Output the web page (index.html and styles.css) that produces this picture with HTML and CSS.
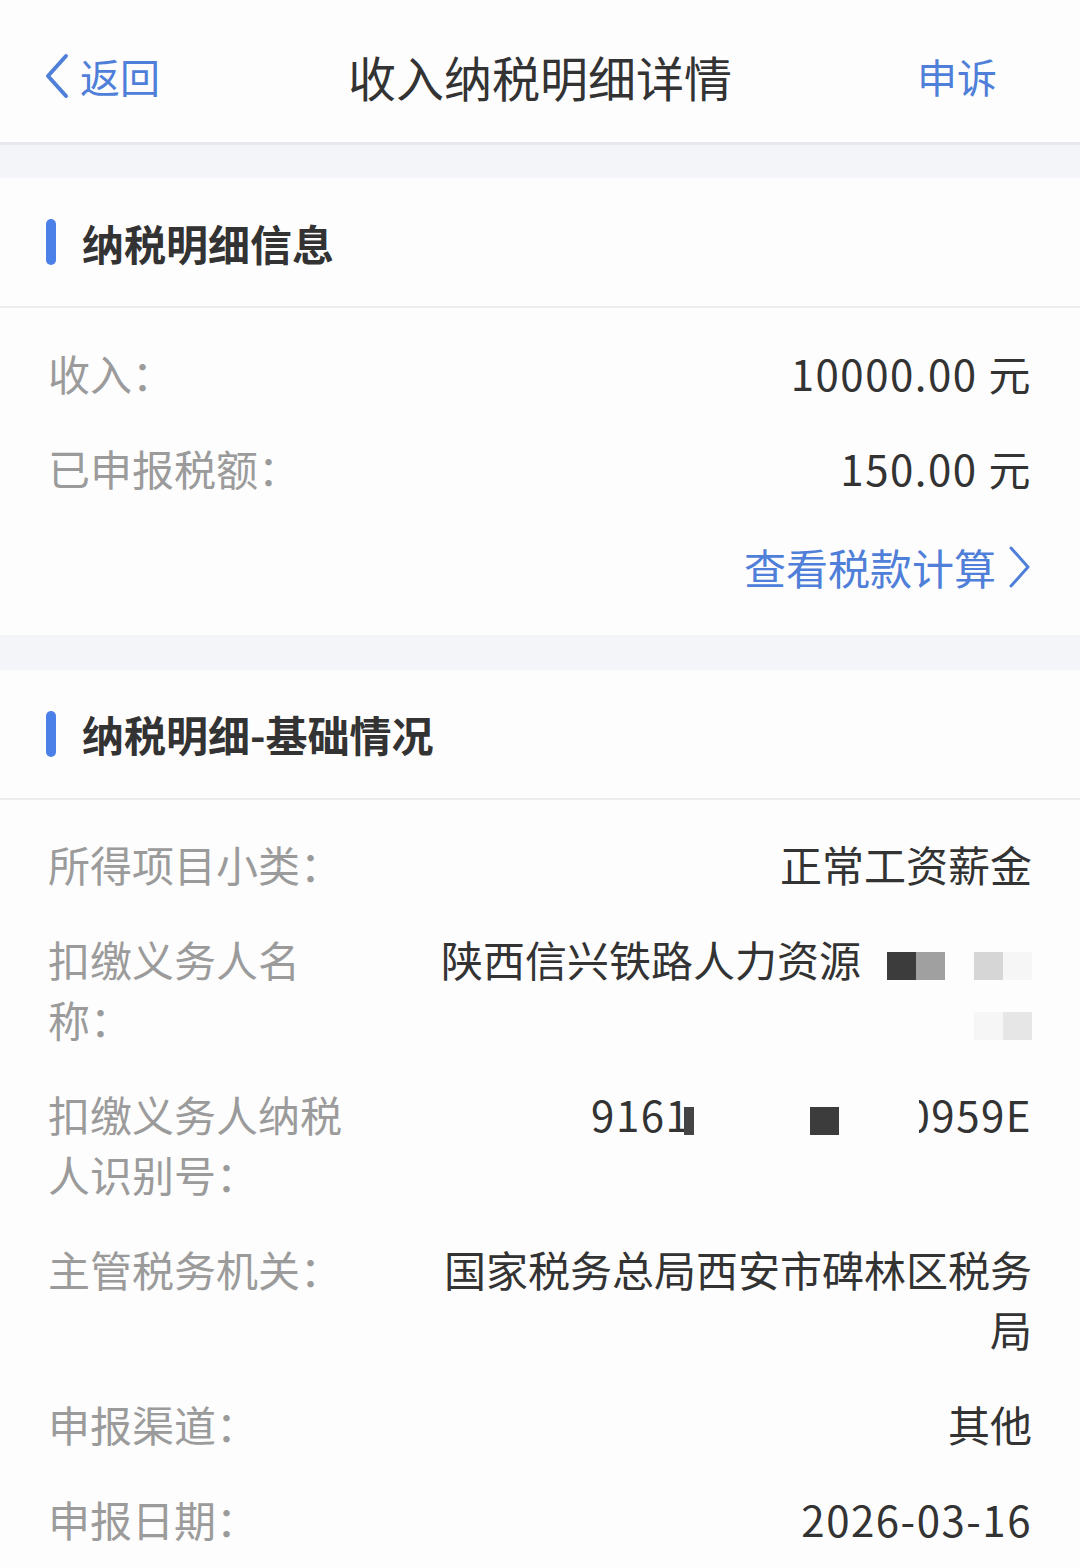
FILE: index.html
```html
<!DOCTYPE html>
<html lang="zh-CN">
<head>
  <meta charset="UTF-8">
  <title>收入纳税明细详情</title>
  <link rel="stylesheet" href="styles.css">
</head>
<body>
  <header class="topbar">
    <a class="back">
      <svg class="back-icon" viewBox="0 0 26 46" width="26" height="46">
        <path d="M22 3 L4 23 L22 43" fill="none" stroke="#4f7fd8" stroke-width="4" stroke-linecap="round" stroke-linejoin="round"/>
      </svg>
      <span>返回</span>
    </a>
    <h1 class="title">收入纳税明细详情</h1>
    <a class="appeal">申诉</a>
  </header>

  <div class="gap"></div>

  <section class="card">
    <div class="card-head">
      <span class="bar"></span>
      <h2>纳税明细信息</h2>
    </div>
    <div class="rows first">
      <div class="row">
        <span class="label">收入：</span>
        <span class="value num">10000.00 元</span>
      </div>
      <div class="row">
        <span class="label">已申报税额：</span>
        <span class="value num">150.00 元</span>
      </div>
      <div class="row link-row">
        <a class="link">查看税款计算
          <svg class="link-icon" viewBox="0 0 26 44" width="26" height="44">
            <path d="M5 3 L22 22 L5 41" fill="none" stroke="#4f7fd8" stroke-width="3" stroke-linecap="round" stroke-linejoin="round"/>
          </svg>
        </a>
      </div>
    </div>
  </section>

  <div class="gap gap-2"></div>

  <section class="card">
    <div class="card-head">
      <span class="bar"></span>
      <h2>纳税明细-基础情况</h2>
    </div>
    <div class="rows">
      <div class="row">
        <span class="label">所得项目小类：</span>
        <span class="value">正常工资薪金</span>
      </div>
      <div class="row">
        <span class="label">扣缴义务人名称：</span>
        <span class="value">陕西信兴铁路人力资源<span class="mask dark first-mask"></span><span class="mask mid"></span><span class="mask blank"></span><span class="mask light"></span><span class="mask faint"></span><br><span class="mask faint"></span><span class="mask light2"></span></span>
      </div>
      <div class="row">
        <span class="label">扣缴义务人纳税人识别号：</span>
        <span class="value num">9161<span class="mask sliver"></span><span class="mask space-a"></span><span class="mask dark"></span><span class="mask space-b"></span><span class="cut">0</span>959E</span>
      </div>
      <div class="row">
        <span class="label">主管税务机关：</span>
        <span class="value">国家税务总局西安市碑林区税务局</span>
      </div>
      <div class="row">
        <span class="label">申报渠道：</span>
        <span class="value">其他</span>
      </div>
      <div class="row">
        <span class="label">申报日期：</span>
        <span class="value num">2026-03-16</span>
      </div>
    </div>
  </section>
</body>
</html>
```

FILE: styles.css
```css
body {
  margin: 0;
  background-color: #fdfdfd;
  color: #333333;
  font-family: "Noto Sans CJK SC", "Noto Sans", sans-serif;
}

.topbar {
  height: 145px;
  display: grid;
  grid-template-columns: 1fr auto 1fr;
  align-items: center;
  padding: 10px 44px 0;
  background-color: #fdfdfd;
  border-bottom: 3px solid #e6e8eb;
  box-sizing: border-box;
}

.back {
  display: flex;
  align-items: center;
  gap: 10px;
  color: #4f7fd8;
  font-size: 40px;
}

.title {
  margin: 0;
  font-size: 48px;
  font-weight: normal;
  color: #333333;
}

.appeal {
  justify-self: end;
  margin-right: 39px;
  color: #4f7fd8;
  font-size: 40px;
}

.gap {
  height: 33px;
  background-color: #f3f5f8;
}

.gap-2 {
  height: 35px;
}

.card {
  background-color: #fdfdfd;
}

.card-head {
  height: 128px;
  display: flex;
  align-items: center;
  gap: 26px;
  padding-left: 46px;
  border-bottom: 2px solid #ececec;
}

.bar {
  width: 10px;
  height: 46px;
  border-radius: 5px;
  background-color: #4a80e8;
}

.card-head h2 {
  margin: 0;
  font-size: 42px;
  font-weight: bold;
  color: #333333;
}

.rows {
  padding: 17px 48px 20px;
}

.row {
  display: flex;
  justify-content: space-between;
  align-items: flex-start;
  padding: 17.5px 0;
  font-size: 42px;
  line-height: 60px;
}

.label {
  width: 320px;
  flex-shrink: 0;
  color: #9b9b9b;
}

.value {
  flex: 1;
  margin-left: 66px;
  text-align: right;
  color: #333333;
}

.num {
  letter-spacing: 1.5px;
}

.link-row {
  justify-content: flex-end;
  padding-top: 22px;
}

.link {
  display: flex;
  align-items: center;
  gap: 10px;
  color: #4f7fd8;
}

.mask {
  display: inline-block;
  width: 29px;
  height: 28px;
  vertical-align: middle;
}

.dark {
  background-color: #3c3c3c;
}

.first-mask {
  margin-left: 26px;
}

.mid {
  background-color: #a0a0a0;
}

.blank {
  width: 29px;
}

.light {
  background-color: #d6d6d6;
}

.faint {
  background-color: #f6f6f6;
}

.light2 {
  background-color: #e6e6e6;
}

.sliver {
  width: 10px;
  background-color: #444444;
  margin-left: -6px;
}

.space-a {
  width: 116px;
}

.space-b {
  width: 80px;
}

.cut {
  display: inline-block;
  width: 12px;
  overflow: hidden;
  direction: rtl;
  vertical-align: top;
}
```
